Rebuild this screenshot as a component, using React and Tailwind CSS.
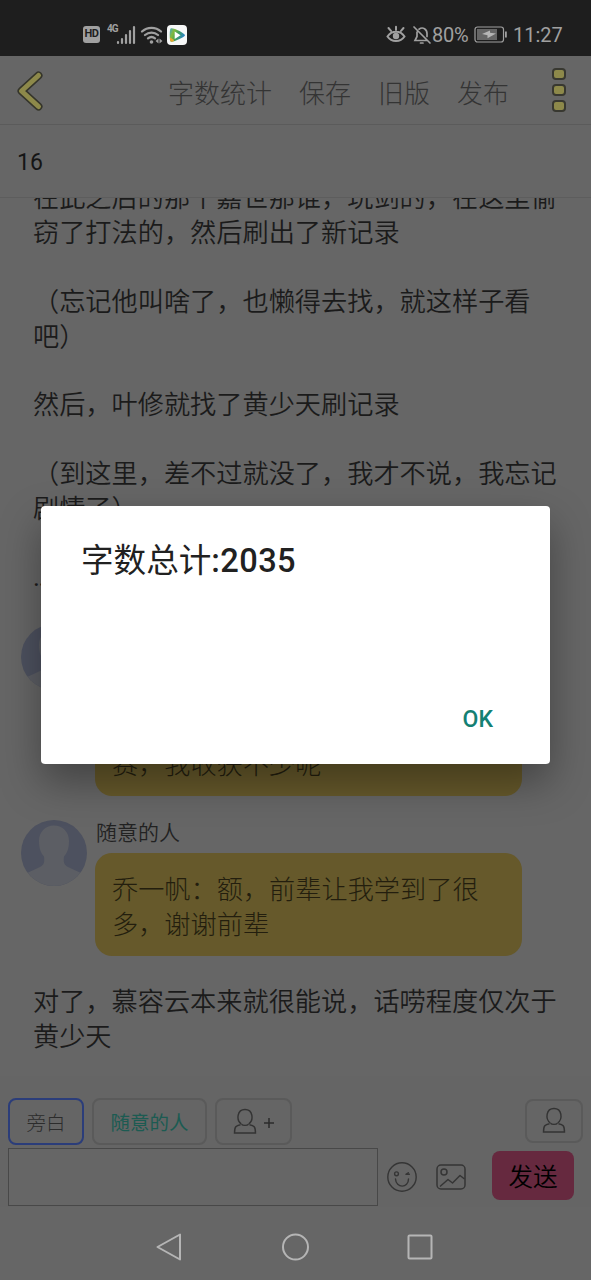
const narration = [
  ['在此之后的那个嘉世那谁，玩剑的，在这里偷', '窃了打法的，然后刷出了新记录'],
  ['（忘记他叫啥了，也懒得去找，就这样子看', '吧）'],
  ['然后，叶修就找了黄少天刷记录'],
  ['（到这里，差不过就没了，我才不说，我忘记', '剧情了）'],
];

function StatusBar() {
  return (
    <div className="flex h-14 shrink-0 items-center justify-between bg-[#1e1e1e] pl-[83px] pr-[28px] pt-[13px] text-[#a0a0a0]">
      <div className="flex items-center">
        <div className="flex h-[17px] w-[17px] items-center justify-center rounded-[3px] bg-[#a0a0a0] text-[11px] font-bold tracking-[-0.5px] text-[#1e1e1e]">HD</div>
        <span className="-mt-3 ml-[7px] w-[10px] text-[10px] leading-none font-bold tracking-[-1px]">4G</span>
        <svg className="-ml-[1px] h-[20px] w-[20px]" viewBox="0 0 20 20" stroke="currentColor" strokeWidth="2.200" strokeLinecap="round">
          <path d="M2 18v-1M6 18v-4M10 18v-8M14 18V6M18 18V2" />
        </svg>
        <svg className="ml-[4px] h-[20px] w-[24px]" viewBox="0 0 24 20" fill="none" stroke="currentColor" strokeWidth="2.300" strokeLinecap="round">
          <path d="M2 6.500a14 14 0 0 1 19 0M5 10a10 10 0 0 1 13 0M8 13.400a5.600 5.600 0 0 1 7 0" />
          <circle cx="11.500" cy="17" r="1.800" fill="currentColor" stroke="none" />
          <path d="M18.500 13.500v5l-3-2.500zM19.500 13.500v5l3-2.500z" fill="currentColor" stroke="none" />
        </svg>
        <svg className="ml-[3px] h-[20px] w-[20px]" viewBox="0 0 20 20">
          <defs>
            <linearGradient id="play" x1="0" y1="0" x2="1" y2="0.4">
              <stop offset="0" stopColor="#3fa6cb" />
              <stop offset="0.3" stopColor="#83b93b" />
              <stop offset="0.6" stopColor="#43a05a" />
              <stop offset="1" stopColor="#2b83c2" />
            </linearGradient>
          </defs>
          <rect width="20" height="20" rx="4" fill="#f7f8f8" />
          <path d="M3.600 3.600C5 1.900 18 8.500 18 10.200S5 18 3.600 16.500C2.400 15 2.400 5.200 3.600 3.600z" fill="url(#play)" />
          <path d="M3 12.500l3.500 2c1 1 .2 2.300-1.500 2.300-2 0-2.200-2-2-4.300z" fill="#e7a832" />
          <path d="M7.700 6.500l5.800 3.700-5.800 3.800z" fill="#fff" />
        </svg>
      </div>
      <div className="flex items-center text-[20px]">
        <svg className="h-[20px] w-[20px]" viewBox="0 0 20 20" fill="none" stroke="currentColor" strokeWidth="2" strokeLinecap="round">
          <path d="M1.500 11.500c4-6.500 13-6.500 17 0-4 6-13 6-17 0zM10 5V1.800M5 5.800L2.500 3M15 5.800L17.500 3" />
          <circle cx="10" cy="11" r="3.200" fill="currentColor" stroke="none" />
        </svg>
        <svg className="ml-[6px] h-[20px] w-[20px]" viewBox="0 0 20 20" fill="none" stroke="currentColor" strokeWidth="1.700" strokeLinecap="round">
          <path d="M2 2l16 16M7 4.200c4-3 8 .3 8 4.300v3M5 7v4.500L3 15.500h11.500M8.500 18h2.500" />
        </svg>
        <span className="w-[38px] tracking-[-0.3px]">80%</span>
        <svg className="ml-[4px] h-[17px] w-[34px]" viewBox="0 0 34 17">
          <rect x="1" y="1" width="28.500" height="15" rx="2.500" fill="none" stroke="currentColor" strokeWidth="1.200" />
          <rect x="3" y="3" width="20" height="11" fill="#666" />
          <path d="M31 5.500h1.800v6H31z" fill="currentColor" />
          <path d="M8 8l8-3.500v2.300l6 .8-8.500 4.700V9.200z" fill="#b5b5b5" />
        </svg>
        <span className="ml-[5px] w-[50px]">11:27</span>
      </div>
    </div>
  );
}

function Header() {
  return (
    <div className="flex h-[69px] shrink-0 items-center border-b border-[#5b5b5b] pl-[17px] pr-[25px] text-[26px] font-light text-[#343434]">
      <svg className="mt-px h-[40px] w-[27px]" viewBox="0 0 27 40" fill="none" strokeLinecap="round" strokeLinejoin="round">
        <path d="M21.500 4.500L4.500 20l17 15.500" stroke="#35352a" strokeWidth="8" />
        <path d="M21.500 4.500L4.500 20l17 15.500" stroke="#8d894a" strokeWidth="5" />
      </svg>
      <div className="ml-auto flex gap-[27px] pt-[8px]">
        <span>字数统计</span>
        <span>保存</span>
        <span>旧版</span>
        <span>发布</span>
      </div>
      <div className="ml-[43px] flex flex-col gap-[4px]">
        <i className="h-[12px] w-[14px] rounded-[4px] border-2 border-[#383830] bg-[#8d894a]" />
        <i className="h-[12px] w-[14px] rounded-[4px] border-2 border-[#383830] bg-[#8d894a]" />
        <i className="h-[12px] w-[14px] rounded-[4px] border-2 border-[#383830] bg-[#8d894a]" />
      </div>
    </div>
  );
}

function Avatar() {
  return (
    <svg className="h-[66px] w-[66px] shrink-0 rounded-full" viewBox="0 0 66 66">
      <rect width="66" height="66" fill="#4d515f" />
      <path d="M33 5.500c9 0 15 6.500 15 15.500 0 8-2 12-5 15.500-.8 6 .2 8.500 4 10.500l13 6L66 66H0l6-13 13-6c3.800-2 4.800-4.500 4-10.500-3-3.500-5-7.500-5-15.500C18 12 24 5.500 33 5.500z" fill="#5c5e64" />
    </svg>
  );
}

function Message({ name, lines, tall }) {
  return (
    <div className="flex gap-2 pl-[21px]">
      <Avatar />
      <div className="w-[427px]">
        <div className="h-[33px] pl-px pt-px text-[21px] leading-[24px] font-[350] text-[#222]">{name}</div>
        <div className={`flex flex-col justify-end rounded-[17px] bg-[#66592b] px-[17px] pb-[13px] text-[26.2px] leading-[35px] font-light text-[#231e0e] ${tall ? 'h-[139px]' : 'h-[103px]'}`}>
          {lines.map((l) => <div key={l} className="whitespace-nowrap">{l}</div>)}
        </div>
      </div>
    </div>
  );
}

function Person() {
  return (
    <svg className="h-[27px] w-[24px]" viewBox="0 0 24 27" fill="none" stroke="#333" strokeWidth="1.400">
      <path d="M8.300 16C3 12 4 1.500 12 1.500S21 12 15.700 16M8.500 16.200c1.200 1.500 5.800 1.500 7 0M7.500 16.700C3 17.500 1.500 18.500 1.500 25h21c0-6.500-1.500-7.500-6-8.300" />
    </svg>
  );
}

function Composer() {
  return (
    <div className="flex h-[131px] shrink-0 flex-col bg-[#656565] pt-[22px]">
      <div className="flex h-[47px] items-center gap-2 px-2 text-[19.500px] font-light">
        <div className="flex h-[47px] w-[76px] items-center justify-center rounded-[8px] border-2 border-[#2b3d7a] pt-[4px] text-[#2c2c2c]">旁白</div>
        <div className="flex h-[47px] w-[115px] items-center justify-center rounded-[8px] border-2 border-[#5a5a5a] pt-[4px] font-normal text-[#1c5b52]">随意的人</div>
        <div className="flex h-[47px] w-[77px] items-center justify-center gap-[6px] rounded-[8px] border-2 border-[#5a5a5a]">
          <Person />
          <svg className="mt-[2px] h-[12px] w-[12px]" viewBox="0 0 12 12" stroke="#2b2b2b" strokeWidth="1.500"><path d="M6 1v10M1 6h10" /></svg>
        </div>
        <div className="-mt-[2px] ml-auto flex h-[44px] w-[58px] items-center justify-center rounded-[8px] border-2 border-[#5a5a5a]">
          <Person />
        </div>
      </div>
      <div className="flex items-center pl-2 pt-[3px]">
        <div className="h-[58px] w-[370px] border border-[#484848] bg-[#666]" />
        <svg className="ml-[8px] h-[32px] w-[32px]" viewBox="0 0 32 32" fill="none" stroke="#353535" strokeWidth="1.400" strokeLinecap="round">
          <circle cx="16" cy="16" r="14.200" />
          <circle cx="10.500" cy="12.800" r="1.900" />
          <path d="M9.500 18c.5 9.500 13 9.500 13 0M20 13.300l2.300-1.600M20 13.300h3.400" />
        </svg>
        <svg className="ml-[17px] h-[28px] w-[32px]" viewBox="0 0 32 28" fill="none" stroke="#353535" strokeWidth="1.500" strokeLinejoin="round">
          <rect x="2" y="2" width="28" height="24" rx="4" />
          <circle cx="9" cy="9" r="3" />
          <path d="M5 23.500l8-7 4.500 3.500 7.500-7.500 4.500 3.500" />
        </svg>
        <div className="-mt-[4px] ml-[25px] flex h-[49px] w-[82px] items-center justify-center rounded-[8px] bg-[#66293f] pt-[6px] text-[24.500px] font-[350] text-black">发送</div>
      </div>
    </div>
  );
}

function NavBar() {
  return (
    <div className="flex h-[73px] shrink-0 items-center justify-center gap-[97px] bg-[#666] pb-[2px] pr-[1px] pt-[8px]">
      <svg className="h-7 w-7" viewBox="0 0 28 28" fill="none" stroke="#b5b5b5" strokeWidth="2" strokeLinejoin="round"><path d="M24 1.500v25L1.500 14z" /></svg>
      <svg className="h-7 w-7" viewBox="0 0 28 28" fill="none" stroke="#b5b5b5" strokeWidth="2"><circle cx="14.500" cy="14" r="12.500" /></svg>
      <svg className="h-7 w-7" viewBox="0 0 28 28" fill="none" stroke="#b5b5b5" strokeWidth="2"><rect x="2.500" y="2.500" width="23" height="23" rx="1" /></svg>
    </div>
  );
}

export default function App() {
  return (
    <div className="relative flex h-[1280px] w-[591px] flex-col overflow-hidden bg-[#666] font-[Roboto,'Noto_Sans_CJK_SC',sans-serif]">
      <StatusBar />
      <Header />
      <div className="flex h-[73px] shrink-0 items-center border-b border-[#5d5d5d] pl-[17px] pt-[4px] text-[23px] text-[#151515]">16</div>
      <div className="flex min-h-0 flex-1 flex-col overflow-hidden">
        <div className="-mt-[17px] flex shrink-0 flex-col gap-[33.500px] pl-[33px] text-[26.200px] leading-[35px] font-[350] text-[#1b1b1b]">
          {narration.map((p) => (
            <div key={p[0]}>
              {p.map((l) => <div key={l} className="h-[35px] whitespace-nowrap">{l}</div>)}
            </div>
          ))}
          <div className="h-[35px] font-normal tracking-[-1.5px]">...</div>
        </div>
        <div className="mt-[29px] flex shrink-0 flex-col gap-[24px]">
          <Message name="" lines={['赛，我收获不少呢']} tall />
          <Message name="随意的人" lines={['乔一帆：额，前辈让我学到了很', '多，谢谢前辈']} />
        </div>
        <div className="mt-[29px] shrink-0 pl-[33px] text-[26.200px] leading-[35px] font-[350] whitespace-nowrap text-[#1b1b1b]">
          <div>对了，慕容云本来就很能说，话唠程度仅次于</div>
          <div>黄少天</div>
        </div>
      </div>
      <Composer />
      <NavBar />
      <div className="absolute left-[41px] top-[506px] flex h-[258px] w-[509px] flex-col justify-between rounded-[4px] bg-white pb-[28px] pl-[40px] pr-[57px] pt-[32px] shadow-[0_18px_40px_rgba(0,0,0,0.35)]">
        <div className="text-[32.600px] leading-[46px] text-[#212121]">字数总计<span className="font-medium tracking-[0.4px]">:2035</span></div>
        <div className="text-right text-[23px] leading-8 font-medium text-[#148073]">OK</div>
      </div>
    </div>
  );
}
